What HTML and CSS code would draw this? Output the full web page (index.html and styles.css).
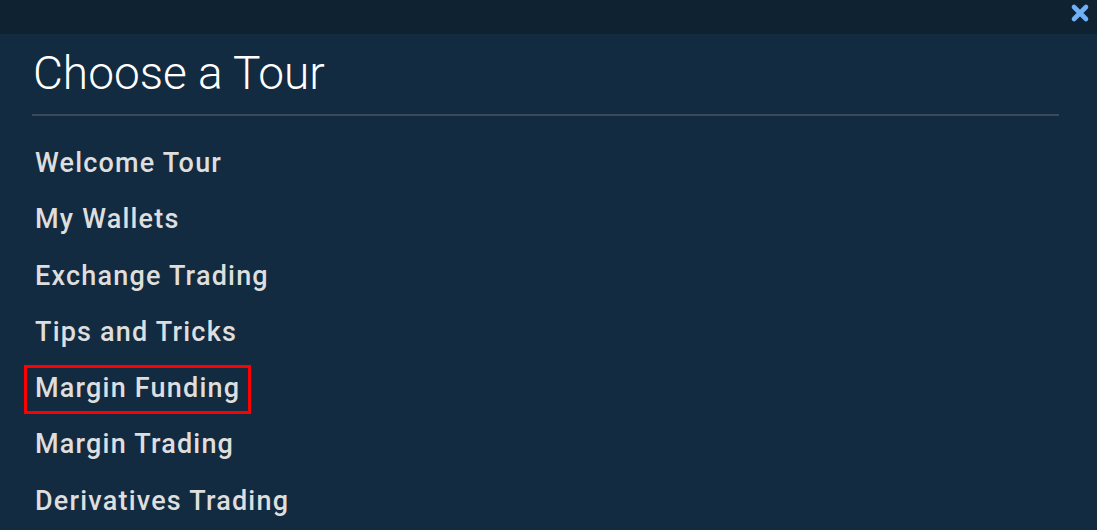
FILE: index.html
```html
<!DOCTYPE html>
<html>
<head>
<meta charset="utf-8">
<link rel="stylesheet" href="styles.css">
</head>
<body>
<div class="topbar">
  <svg class="close" viewBox="0 0 20 20" width="20" height="20">
    <path d="M4 4 L16 16 M16 4 L4 16" stroke="#6fb1f7" stroke-width="4.6" stroke-linecap="round"/>
  </svg>
</div>
<div class="panel">
  <h1 class="title">Choose a Tour</h1>
  <ul class="tours">
    <li class="tour">Welcome Tour</li>
    <li class="tour">My Wallets</li>
    <li class="tour">Exchange Trading</li>
    <li class="tour">Tips and Tricks</li>
    <li class="tour highlighted">Margin Funding</li>
    <li class="tour">Margin Trading</li>
    <li class="tour">Derivatives Trading</li>
  </ul>
</div>
</body>
</html>
```
FILE: styles.css
```css
html, body {
  margin: 0;
  padding: 0;
  height: 100%;
  overflow: hidden;
  background: #132b40;
  font-family: Roboto, "Liberation Sans", sans-serif;
}
.topbar {
  height: 34px;
  background: #0f2232;
  display: flex;
  justify-content: flex-end;
  align-items: flex-start;
}
.close {
  margin: 3px 7px 0 0;
}
.panel {
  padding: 0 38px 0 32px;
}
.title {
  margin: 0;
  padding: 6px 0 0 1px;
  font-weight: 300;
  font-size: 46px;
  line-height: 66px;
  color: #ffffff;
  border-bottom: 2px solid #3d4a55;
  height: 74px;
}
.tours {
  list-style: none;
  margin: 0;
  padding: 19px 0 0 3px;
}
.tour {
  font-size: 27px;
  font-weight: 500;
  line-height: 56.3px;
  height: 56.3px;
  color: #dedede;
  letter-spacing: 1.2px;
}
.highlighted {
  display: inline-block;
  margin-left: -11px;
  padding: 0 8px 0 8px;
  height: 49px;
  line-height: 41px;
  border: 3px solid #ff0000;
  box-sizing: border-box;
  margin-top: 5px;
  margin-bottom: 2.3px;
  vertical-align: top;
}
```
